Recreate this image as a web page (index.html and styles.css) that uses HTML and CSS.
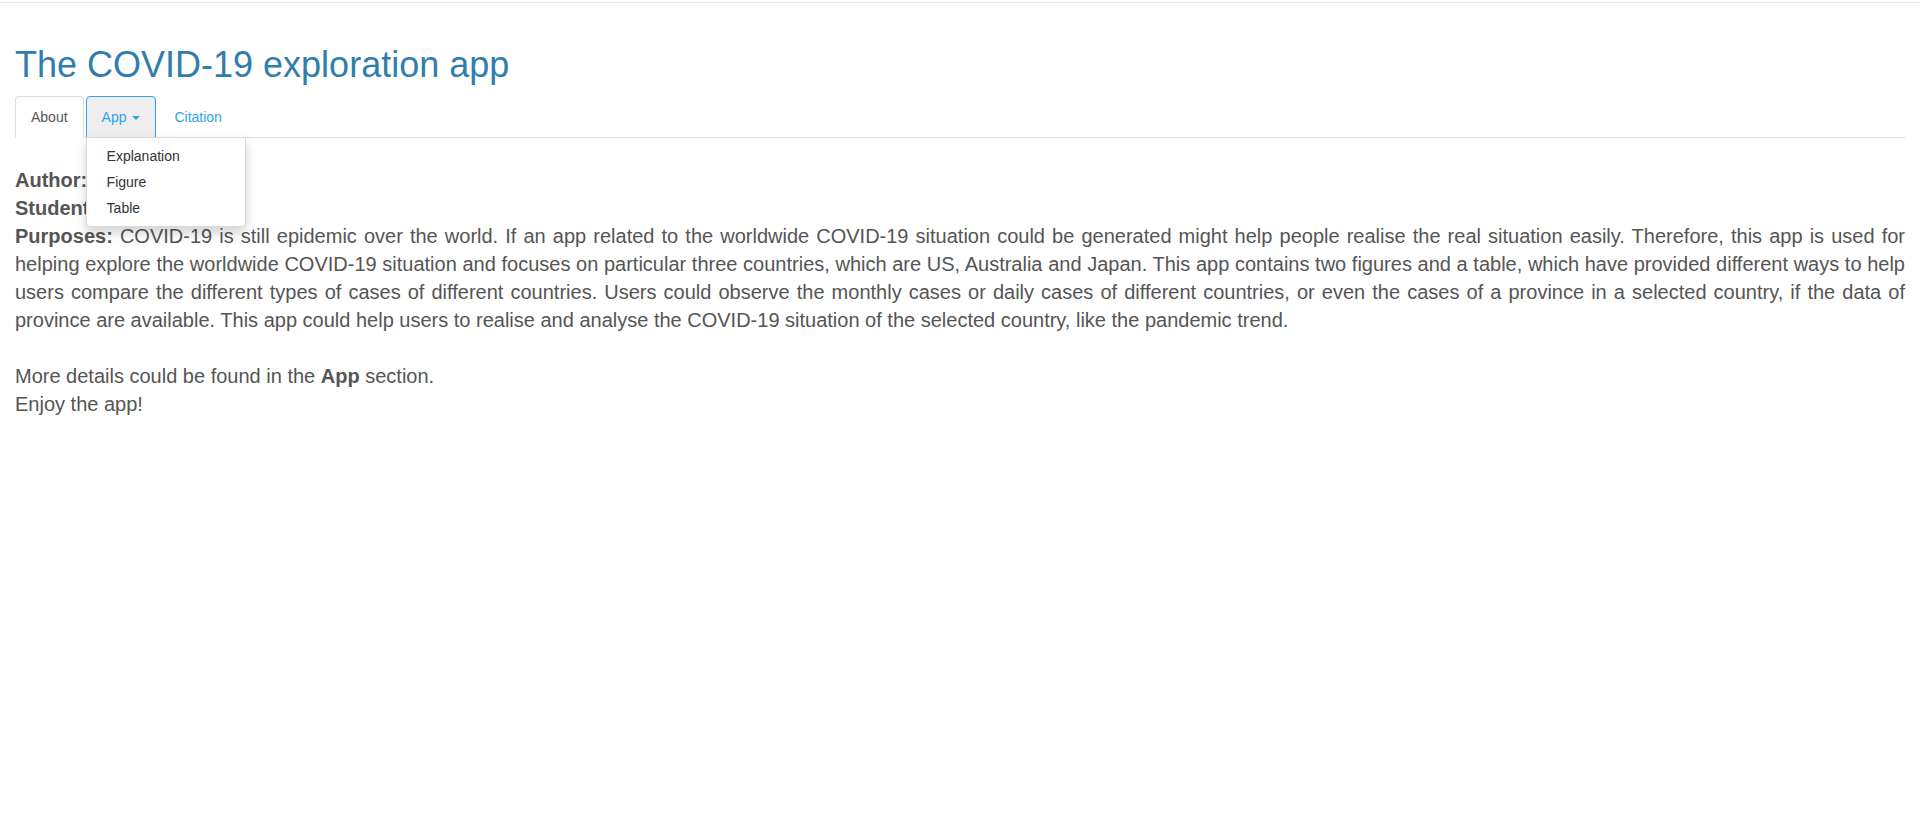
FILE: index.html
```html
<!DOCTYPE html>
<html lang="en">
<head>
<meta charset="utf-8">
<title>The COVID-19 exploration app</title>
<link rel="stylesheet" href="styles.css">
</head>
<body>
<div class="topline"></div>
<div class="container">
  <h1 class="title">The COVID-19 exploration app</h1>
  <ul class="tabs">
    <li class="tab active"><a href="#">About</a></li>
    <li class="tab open">
      <a href="#">App <span class="caret"></span></a>
      <ul class="dropdown">
        <li><a href="#">Explanation</a></li>
        <li><a href="#">Figure</a></li>
        <li><a href="#">Table</a></li>
      </ul>
    </li>
    <li class="tab"><a href="#">Citation</a></li>
  </ul>
  <div class="content">
    <b>Author:</b><br>
    <b>Student ID:</b><br>
    <b>Purposes:</b> COVID-19 is still epidemic over the world. If an app related to the worldwide COVID-19 situation could be generated might help people realise the real situation easily. Therefore, this app is used for helping explore the worldwide COVID-19 situation and focuses on particular three countries, which are US, Australia and Japan. This app contains two figures and a table, which have provided different ways to help users compare the different types of cases of different countries. Users could observe the monthly cases or daily cases of different countries, or even the cases of a province in a selected country, if the data of province are available. This app could help users to realise and analyse the COVID-19 situation of the selected country, like the pandemic trend.<br>
    <br>
    More details could be found in the <b>App</b> section.<br>
    Enjoy the app!
  </div>
</div>
</body>
</html>
```
FILE: styles.css
```css
*, *::before, *::after {
  box-sizing: border-box;
}

html, body {
  margin: 0;
  padding: 0;
  background: #fff;
}

body {
  font-family: "Liberation Sans", Arial, Helvetica, sans-serif;
  color: #555555;
}

.topline {
  margin-top: 2px;
  border-top: 1px solid #e8e8e8;
}

.container {
  padding: 0 15px;
}

.title {
  margin: 42px 0 11px;
  font-size: 36px;
  line-height: 40px;
  font-weight: normal;
  color: #317eac;
}

.tabs {
  display: flex;
  list-style: none;
  margin: 0;
  padding: 0;
  border-bottom: 1px solid #dddddd;
}

.tab {
  position: relative;
  margin: 0 2px -1px 0;
}

.tab > a {
  display: block;
  padding: 10px 15px;
  font-size: 14px;
  line-height: 20px;
  color: #2fa4e7;
  text-decoration: none;
  border: 1px solid transparent;
  border-radius: 4px 4px 0 0;
}

.tab.active > a {
  color: #555555;
  background: #ffffff;
  border-color: #dddddd #dddddd transparent;
}

.tab.open > a {
  background: #eeeeee;
  border-color: #2fa4e7;
}

.caret {
  display: inline-block;
  width: 0;
  height: 0;
  margin-left: 2px;
  vertical-align: middle;
  border-top: 4px solid;
  border-left: 4px solid transparent;
  border-right: 4px solid transparent;
}

.dropdown {
  position: absolute;
  top: 100%;
  left: 0;
  z-index: 10;
  min-width: 160px;
  margin: -1px 0 0;
  padding: 5px 0;
  list-style: none;
  background: #ffffff;
  border: 1px solid rgba(0, 0, 0, 0.15);
  border-radius: 0 0 4px 4px;
  box-shadow: 0 6px 12px rgba(0, 0, 0, 0.175);
}

.dropdown a {
  display: block;
  padding: 3px 20px;
  font-size: 14px;
  line-height: 20px;
  color: #333333;
  text-decoration: none;
  white-space: nowrap;
}

.content {
  padding-top: 28px;
  font-size: 20px;
  line-height: 28px;
  text-align: justify;
}
```
